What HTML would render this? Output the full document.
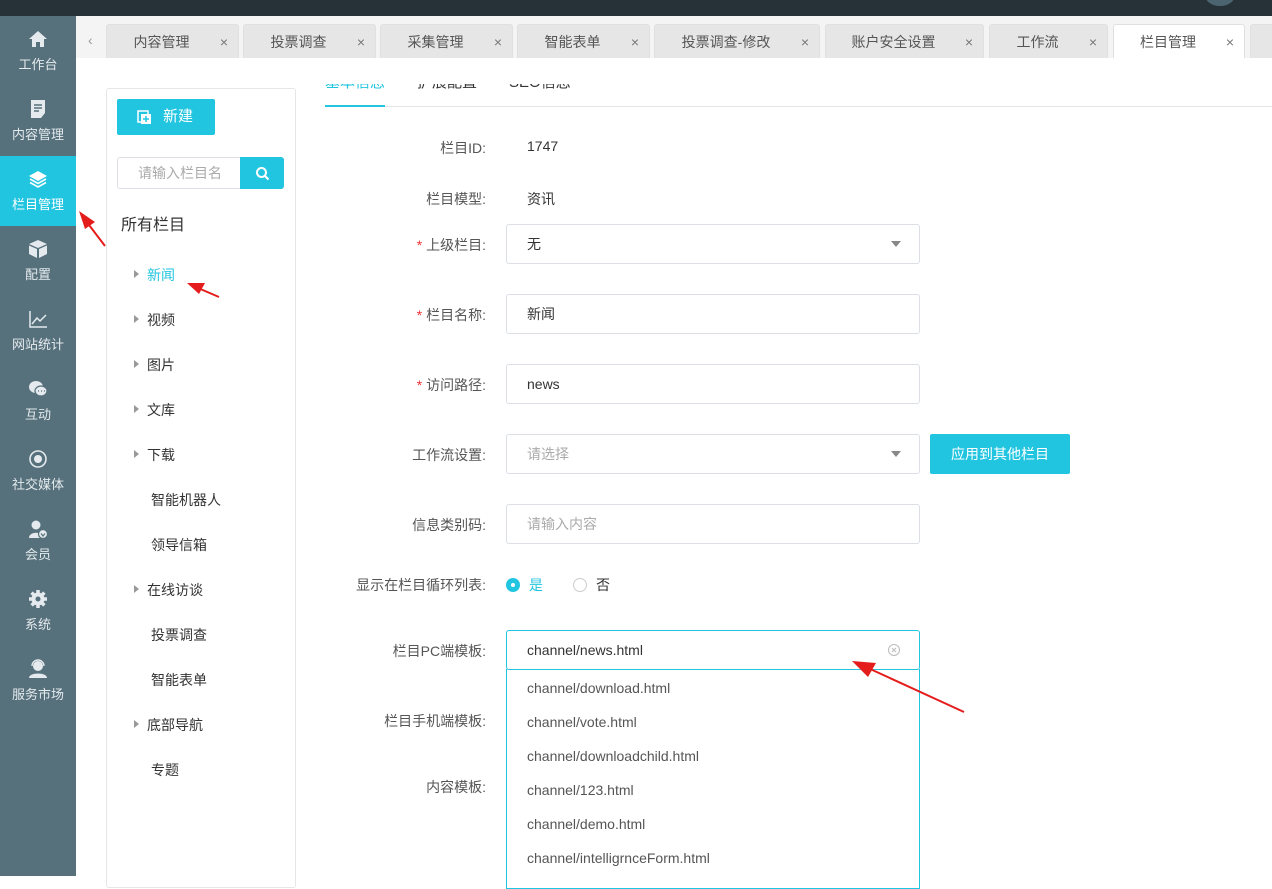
<!DOCTYPE html>
<html><head><meta charset="utf-8"><style>
*{margin:0;padding:0;box-sizing:border-box}
body{width:1272px;height:876px;overflow:hidden;background:#fff;font-family:"Liberation Sans","Noto Sans CJK SC",sans-serif;font-size:14px;color:#333;position:relative}
.a{position:absolute}
.top{left:0;top:0;width:1272px;height:16px;background:#263238}
.side{left:0;top:16px;width:76px;height:860px;background:#56707c}
.si{position:absolute;left:0;width:76px;height:70px;color:#e4eaed;text-align:center;font-size:13px}
.si svg{position:absolute;left:27px;top:12px}
.si span{position:absolute;left:0;width:76px;top:41px;line-height:16px}
.si.act{background:#22c5e0;color:#fff}
.tabbar{left:76px;top:16px;width:1196px;height:42px;background:#f4f4f4}
.tab{position:absolute;top:24px;height:34px;background:#e6e6e6;border:1px solid #e0e0e0;border-bottom:none;border-radius:3px 3px 0 0;color:#555;line-height:34px;font-size:14px}
.tab b{font-weight:normal;position:absolute;left:4px;right:26px;text-align:center}
.tab i{font-style:normal;position:absolute;right:10px;color:#777;font-size:14px}
.tab.on{background:#fff}
.panel{left:106px;top:88px;width:190px;height:800px;border:1px solid #e6e6e6;border-radius:3px}
.tree{position:absolute;left:147px;font-size:14px;color:#333}
.tri{position:absolute;left:134px;width:0;height:0;border-left:5px solid #999;border-top:4px solid transparent;border-bottom:4px solid transparent}
.lbl{position:absolute;right:786px;font-size:14px;color:#555;text-align:right;white-space:nowrap}
.lbl s{text-decoration:none;color:#e33}
.inp{position:absolute;left:506px;width:414px;height:40px;border:1px solid #dcdfe6;border-radius:3px;line-height:38px;padding-left:20px;font-size:14px;color:#333}
.ph{color:#aaa}
.caret{position:absolute;right:18px;top:16px;border-top:6px solid #888;border-left:5px solid transparent;border-right:5px solid transparent}
.dd{left:506px;top:669px;width:414px;height:220px;border:1px solid #22c5e0;border-top:none}
.dd div{position:absolute;left:20px;font-size:14px;color:#555}
</style></head><body>
<div class="a top"><div class="a" style="left:1206px;top:-12px;width:28px;height:18px;border-radius:50%;background:#4b6470"></div></div>
<div class="a side">
 <div class="si" style="top:0"><svg width="22" height="22" viewBox="0 0 22 22"><path d="M2 11 L11 3 L20 11 H17 V19 H13 V14 H9 V19 H5 V11Z" fill="#e4eaed"/></svg><span>工作台</span></div>
 <div class="si" style="top:70px"><svg width="22" height="22" viewBox="0 0 22 22"><path d="M4 2 H18 V15 L14 20 H4Z" fill="#e4eaed"/><path d="M7 7H15M7 10H15M7 13H12" stroke="#56707c" stroke-width="1.6"/></svg><span>内容管理</span></div>
 <div class="si act" style="top:140px"><svg width="22" height="22" viewBox="0 0 22 22"><path d="M11 3 L20 8 L11 13 L2 8Z" fill="#fff"/><path d="M3 11 L11 15.5 L19 11 M3 14.5 L11 19 L19 14.5" stroke="#fff" stroke-width="1.6" fill="none"/></svg><span>栏目管理</span></div>
 <div class="si" style="top:210px"><svg width="22" height="22" viewBox="0 0 22 22"><path d="M11 2 L20 6 L11 10 L2 6Z M2 7.5 L10 11 V20 L2 16Z M12 11 L20 7.5 V16 L12 20Z" fill="#e4eaed"/></svg><span>配置</span></div>
 <div class="si" style="top:280px"><svg width="22" height="22" viewBox="0 0 22 22"><path d="M3 3 V19 H20 M5 16 L10 10 L13 13 L19 7" stroke="#e4eaed" stroke-width="1.5" fill="none"/></svg><span>网站统计</span></div>
 <div class="si" style="top:350px"><svg width="22" height="22" viewBox="0 0 22 22"><ellipse cx="9" cy="9" rx="7" ry="6" fill="#e4eaed"/><ellipse cx="14" cy="13" rx="6" ry="5" fill="#e4eaed" stroke="#56707c" stroke-width="1.2"/><path d="M11 13h1M14 13h1M17 13h1" stroke="#56707c" stroke-width="1.3"/></svg><span>互动</span></div>
 <div class="si" style="top:420px"><svg width="22" height="22" viewBox="0 0 22 22"><circle cx="11" cy="11" r="8" stroke="#e4eaed" stroke-width="1.6" fill="none"/><circle cx="11" cy="11" r="4" fill="#e4eaed"/></svg><span>社交媒体</span></div>
 <div class="si" style="top:490px"><svg width="22" height="22" viewBox="0 0 22 22"><circle cx="9" cy="7" r="4.5" fill="#e4eaed"/><path d="M2 20 C2 13 16 13 16 20Z" fill="#e4eaed"/><circle cx="16" cy="16" r="4.5" fill="#e4eaed" stroke="#56707c" stroke-width="1.2"/><path d="M14 15.5 L16 18 L18 15.5" stroke="#56707c" stroke-width="1.2" fill="none"/></svg><span>会员</span></div>
 <div class="si" style="top:560px"><svg width="22" height="22" viewBox="0 0 22 22"><circle cx="11" cy="11" r="6.5" fill="#e4eaed"/><path d="M11 2V20M2 11H20M4.6 4.6L17.4 17.4M17.4 4.6L4.6 17.4" stroke="#e4eaed" stroke-width="3.5"/><circle cx="11" cy="11" r="2.5" fill="#56707c"/></svg><span>系统</span></div>
 <div class="si" style="top:630px"><svg width="22" height="22" viewBox="0 0 22 22"><circle cx="11" cy="8" r="5" fill="#e4eaed"/><path d="M5 8 A6 6 0 0 1 17 8" stroke="#e4eaed" stroke-width="1.4" fill="none"/><path d="M2 20 C2 14 20 14 20 20Z" fill="#e4eaed"/></svg><span>服务市场</span></div>
</div>
<div class="a tabbar"></div>
<div class="a" style="left:88px;top:32px;color:#999;font-size:14px">‹</div>
<div class="tab" style="left:106px;width:133px"><b>内容管理</b><i>×</i></div>
<div class="tab" style="left:243px;width:133px"><b>投票调查</b><i>×</i></div>
<div class="tab" style="left:380px;width:133px"><b>采集管理</b><i>×</i></div>
<div class="tab" style="left:517px;width:133px"><b>智能表单</b><i>×</i></div>
<div class="tab" style="left:654px;width:166px"><b>投票调查-修改</b><i>×</i></div>
<div class="tab" style="left:825px;width:159px"><b>账户安全设置</b><i>×</i></div>
<div class="tab" style="left:989px;width:119px"><b>工作流</b><i>×</i></div>
<div class="tab on" style="left:1113px;width:132px"><b>栏目管理</b><i>×</i></div>
<div class="tab" style="left:1250px;width:40px"></div>

<div class="a panel"></div>
<div class="a" style="left:117px;top:99px;width:98px;height:36px;background:#22c5e0;border-radius:2px;color:#fff;font-size:15px;line-height:36px;padding-left:46px">新建<svg class="a" style="left:20px;top:11px" width="15" height="15" viewBox="0 0 15 15"><rect x="1" y="1" width="10" height="11" fill="none" stroke="#fff" stroke-width="1.5"/><rect x="4" y="4" width="10" height="10" fill="#fff"/><path d="M9 6V12M6 9H12" stroke="#22c5e0" stroke-width="1.5"/></svg></div>
<div class="a" style="left:117px;top:157px;width:123px;height:32px;border:1px solid #dcdfe6;border-right:none;border-radius:3px 0 0 3px;color:#aaa;line-height:30px;padding-left:20px">请输入栏目名</div>
<div class="a" style="left:240px;top:157px;width:44px;height:32px;background:#22c5e0;border-radius:0 3px 3px 0"><svg class="a" style="left:15px;top:9px" width="15" height="15" viewBox="0 0 15 15"><circle cx="6.5" cy="6.5" r="4.5" stroke="#fff" stroke-width="2" fill="none"/><path d="M10 10L13.5 13.5" stroke="#fff" stroke-width="2"/></svg></div>
<div class="a" style="left:121px;top:211px;font-size:16px;color:#333">所有栏目</div>
<div class="tri" style="top:270px"></div><div class="tree" style="top:265px;color:#22c5e0">新闻</div>
<div class="tri" style="top:315px"></div><div class="tree" style="top:310px">视频</div>
<div class="tri" style="top:360px"></div><div class="tree" style="top:355px">图片</div>
<div class="tri" style="top:405px"></div><div class="tree" style="top:400px">文库</div>
<div class="tri" style="top:450px"></div><div class="tree" style="top:445px">下载</div>
<div class="tree" style="top:490px;left:151px">智能机器人</div>
<div class="tree" style="top:535px;left:151px">领导信箱</div>
<div class="tri" style="top:585px"></div><div class="tree" style="top:580px">在线访谈</div>
<div class="tree" style="top:625px;left:151px">投票调查</div>
<div class="tree" style="top:670px;left:151px">智能表单</div>
<div class="tri" style="top:720px"></div><div class="tree" style="top:715px">底部导航</div>
<div class="tree" style="top:760px;left:151px">专题</div>

<div class="a" style="left:325px;top:84px;width:400px;height:13px;overflow:hidden"><div class="a" style="top:-11px;left:0;font-size:15px;white-space:nowrap;line-height:20px"><span style="color:#22c5e0">基本信息</span><span style="margin-left:32px">扩展配置</span><span style="margin-left:32px">SEO信息</span></div></div>
<div class="a" style="left:325px;top:106px;width:947px;height:1px;background:#e4e4e4"></div>
<div class="a" style="left:325px;top:105px;width:60px;height:2px;background:#22c5e0"></div>

<div class="lbl" style="top:138px">栏目ID:</div><div class="a" style="left:527px;top:138px">1747</div>
<div class="lbl" style="top:189px">栏目模型:</div><div class="a" style="left:527px;top:189px">资讯</div>
<div class="lbl" style="top:235px"><s>*</s> 上级栏目:</div><div class="inp" style="top:224px">无<div class="caret"></div></div>
<div class="lbl" style="top:305px"><s>*</s> 栏目名称:</div><div class="inp" style="top:294px">新闻</div>
<div class="lbl" style="top:375px"><s>*</s> 访问路径:</div><div class="inp" style="top:364px">news</div>
<div class="lbl" style="top:445px">工作流设置:</div><div class="inp ph" style="top:434px">请选择<div class="caret"></div></div>
<div class="a" style="left:930px;top:434px;width:140px;height:40px;background:#22c5e0;color:#fff;border-radius:2px;text-align:center;line-height:40px">应用到其他栏目</div>
<div class="lbl" style="top:515px">信息类别码:</div><div class="inp ph" style="top:504px">请输入内容</div>
<div class="lbl" style="top:575px">显示在栏目循环列表:</div>
<div class="a" style="left:506px;top:578px;width:14px;height:14px;border-radius:50%;background:#22c5e0"><div class="a" style="left:5px;top:5px;width:4px;height:4px;border-radius:50%;background:#fff"></div></div>
<div class="a" style="left:529px;top:575px;color:#22c5e0">是</div>
<div class="a" style="left:573px;top:578px;width:14px;height:14px;border-radius:50%;border:1px solid #ccc"></div>
<div class="a" style="left:596px;top:575px">否</div>
<div class="lbl" style="top:641px">栏目PC端模板:</div>
<div class="inp" style="top:630px;border-color:#22c5e0">channel/news.html<svg class="a" style="right:18px;top:12px" width="14" height="14" viewBox="0 0 14 14"><circle cx="7" cy="7" r="5.5" stroke="#bbb" fill="none"/><path d="M5 5L9 9M9 5L5 9" stroke="#bbb"/></svg></div>
<div class="lbl" style="top:711px">栏目手机端模板:</div>
<div class="lbl" style="top:777px">内容模板:</div>
<div class="a dd">
 <div style="top:11px">channel/download.html</div>
 <div style="top:45px">channel/vote.html</div>
 <div style="top:79px">channel/downloadchild.html</div>
 <div style="top:113px">channel/123.html</div>
 <div style="top:147px">channel/demo.html</div>
 <div style="top:181px">channel/intelligrnceForm.html</div>
</div>
<svg class="a" style="left:0;top:0" width="1272" height="876">
 <path d="M105 246 L86 221" stroke="#e51c1c" stroke-width="2"/><path d="M79 211 L95 222 L85 229Z" fill="#e51c1c"/>
 <path d="M219 297 L198 288" stroke="#e51c1c" stroke-width="2"/><path d="M187 283 L205 283 L199 294Z" fill="#e51c1c"/>
 <path d="M964 712 L868 668" stroke="#e51c1c" stroke-width="2"/><path d="M852 661 L876 663 L868 677Z" fill="#e51c1c"/>
</svg>
</body></html>
